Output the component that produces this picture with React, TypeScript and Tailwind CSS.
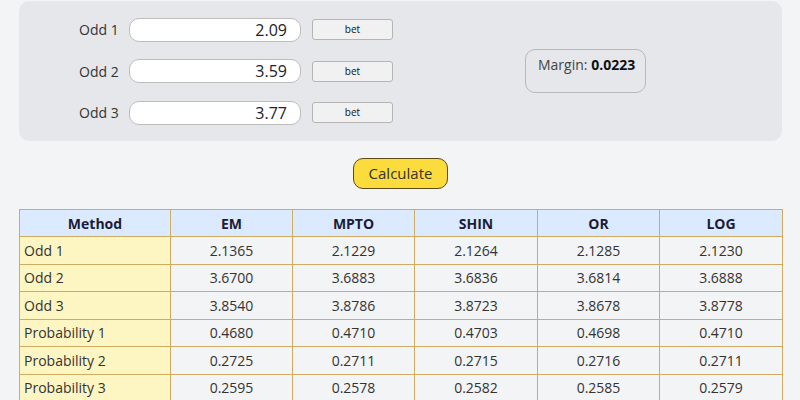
import React from "react";

const odds = ["2.09", "3.59", "3.77"];
const cols = ["EM", "MPTO", "SHIN", "OR", "LOG"];
const rows: [string, string[]][] = [
  ["Odd 1", ["2.1365", "2.1229", "2.1264", "2.1285", "2.1230"]],
  ["Odd 2", ["3.6700", "3.6883", "3.6836", "3.6814", "3.6888"]],
  ["Odd 3", ["3.8540", "3.8786", "3.8723", "3.8678", "3.8778"]],
  ["Probability 1", ["0.4680", "0.4710", "0.4703", "0.4698", "0.4710"]],
  ["Probability 2", ["0.2725", "0.2711", "0.2715", "0.2716", "0.2711"]],
  ["Probability 3", ["0.2595", "0.2578", "0.2582", "0.2585", "0.2579"]],
];

export default function App() {
  return (
    <div
      className="w-[800px] h-[400px] overflow-hidden bg-[#f3f4f6] text-[#333]"
      style={{ fontFamily: '"Open Sans", "Noto Sans", sans-serif' }}
    >
      <div className="ml-[19px] w-[763px] pt-px">
        <div className="flex items-center h-[140px] rounded-[10px] bg-[#e5e7eb] pl-[60px]">
          <div className="flex flex-col gap-[17.5px]">
            {odds.map((o, i) => (
              <div key={i} className="flex items-center">
                <span className="w-[38px] text-right text-[14px] text-[#333] whitespace-nowrap">Odd {i + 1}</span>
                <div className="ml-[12px] w-[172px] h-[24px] rounded-[10px] border-[1.5px] border-[#bdbdbd] bg-white flex items-center justify-end pr-[13px] text-[16px] text-[#222]">
                  {o}
                </div>
                <button className="ml-[11px] w-[81px] h-[21px] rounded-[3px] border border-[#b5b5b5] bg-[#f1f1f1] text-[10px] text-[#111] flex items-center justify-center">
                  bet
                </button>
              </div>
            ))}
          </div>
          <div className="ml-[132px] w-[121px] h-[44px] rounded-[10px] border-[1.5px] border-[#b8b8b8] pt-[4px] pl-[12px] text-[14px] text-[#444] whitespace-nowrap">
            Margin: <b className="text-[#111] font-bold">0.0223</b>
          </div>
        </div>
        <div className="flex justify-center mt-[17px]">
          <button className="w-[95px] h-[31px] rounded-[10px] border-[1.5px] border-[#5b4a16] bg-[#fcdc3c] text-[15px] text-[#333] flex items-center justify-center">
            Calculate
          </button>
        </div>
        <table className="mt-[20px] w-[763px] table-fixed border-collapse text-[14px]">
          <colgroup>
            <col className="w-[151px]" />
            <col className="w-[122px]" />
            <col className="w-[122px]" />
            <col className="w-[123px]" />
            <col className="w-[122px]" />
            <col className="w-[123px]" />
          </colgroup>
          <thead>
            <tr className="h-[27px] bg-[#dbeafe]">
              <th className="border border-[#cfac62] font-bold text-[#1c1c36] text-center">Method</th>
              {cols.map((c) => (
                <th key={c} className="border border-[#cfac62] font-bold text-[#1c1c36] text-center">{c}</th>
              ))}
            </tr>
          </thead>
          <tbody>
            {rows.map(([label, vals]) => (
              <tr key={label} className="h-[27.5px]">
                <td className="border border-[#cfac62] bg-[#fef6c2] text-left pl-[4px] text-[#333]">{label}</td>
                {vals.map((v, j) => (
                  <td key={j} className="border border-[#cfac62] bg-[#f3f4f6] text-center text-[#333]">{v}</td>
                ))}
              </tr>
            ))}
          </tbody>
        </table>
      </div>
    </div>
  );
}
